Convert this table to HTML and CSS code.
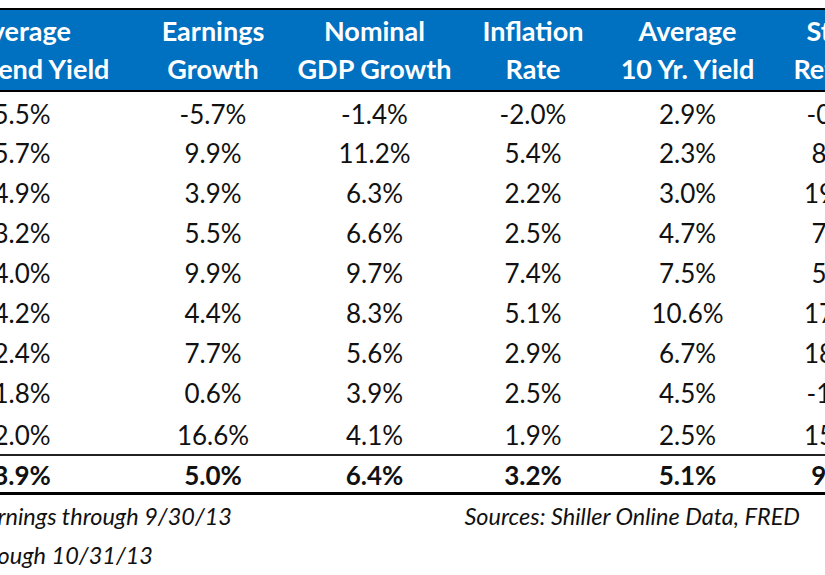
FILE: index.html
```html
<!DOCTYPE html>
<html>
<head>
<meta charset="utf-8">
<link rel="stylesheet" href="styles.css">
</head>
<body>
<div class="frame">
  <div class="sheet">
    <table class="grid">
      <colgroup>
        <col class="c-div"><col class="c-earn"><col class="c-gdp"><col class="c-inf"><col class="c-yld"><col class="c-ret">
      </colgroup>
      <thead>
        <tr>
          <th>Average<br>Dividend Yield</th>
          <th>Earnings<br>Growth</th>
          <th>Nominal<br>GDP Growth</th>
          <th>Inflation<br>Rate</th>
          <th>Average<br>10 Yr. Yield</th>
          <th>Stock<br>Returns</th>
        </tr>
      </thead>
      <tbody>
        <tr><td>5.5%</td><td>-5.7%</td><td>-1.4%</td><td>-2.0%</td><td>2.9%</td><td>-0.9%</td></tr>
        <tr><td>5.7%</td><td>9.9%</td><td>11.2%</td><td>5.4%</td><td>2.3%</td><td>8.0%</td></tr>
        <tr><td>4.9%</td><td>3.9%</td><td>6.3%</td><td>2.2%</td><td>3.0%</td><td>19.3%</td></tr>
        <tr><td>3.2%</td><td>5.5%</td><td>6.6%</td><td>2.5%</td><td>4.7%</td><td>7.8%</td></tr>
        <tr><td>4.0%</td><td>9.9%</td><td>9.7%</td><td>7.4%</td><td>7.5%</td><td>5.9%</td></tr>
        <tr><td>4.2%</td><td>4.4%</td><td>8.3%</td><td>5.1%</td><td>10.6%</td><td>17.3%</td></tr>
        <tr><td>2.4%</td><td>7.7%</td><td>5.6%</td><td>2.9%</td><td>6.7%</td><td>18.1%</td></tr>
        <tr><td>1.8%</td><td>0.6%</td><td>3.9%</td><td>2.5%</td><td>4.5%</td><td>-1.2%</td></tr>
        <tr class="last"><td>2.0%</td><td>16.6%</td><td>4.1%</td><td>1.9%</td><td>2.5%</td><td>15.4%</td></tr>
      </tbody>
      <tfoot>
        <tr><td>3.9%</td><td>5.0%</td><td>6.4%</td><td>3.2%</td><td>5.1%</td><td>9.5%</td></tr>
      </tfoot>
    </table>
    <div class="notes">
      <div class="notes-left">
        <p class="note-a">*Earnings through 9/30/13</p>
        <p class="note-b">Through 10/31/13</p>
      </div>
      <p class="notes-right">Sources: Shiller Online Data, FRED</p>
    </div>
  </div>
</div>
</body>
</html>
```
FILE: styles.css
```css
html, body {
  margin: 0;
  padding: 0;
  background: #ffffff;
}
.frame {
  width: 825px;
  height: 575px;
  overflow: hidden;
  background: #ffffff;
}
.sheet {
  margin-left: -88px;
  width: 1004px;
  padding-top: 8px;
  font-family: Lato, "Open Sans", sans-serif;
  color: #111111;
}
.grid {
  border-collapse: collapse;
  table-layout: fixed;
  width: 1004px;
}
.c-div { width: 220px; }
.c-earn { width: 162px; }
.c-gdp { width: 161px; }
.c-inf { width: 156px; }
.c-yld { width: 153px; }
.c-ret { width: 152px; }
.grid thead tr { height: 82px; }
.grid thead th {
  background: #0070c0;
  color: #ffffff;
  font-weight: 700;
  font-size: 27px;
  line-height: 38px;
  padding: 2px 0 0;
  text-align: center;
  vertical-align: top;
  white-space: nowrap;
  border-top: 2px solid #000;
  border-bottom: 2px solid #000;
}
.grid tbody tr { height: 40px; }
.grid tbody tr.last { height: 44px; }
.grid td {
  text-align: center;
  font-size: 26px;
  line-height: 30px;
  padding: 7px 0 0;
  vertical-align: top;
  white-space: nowrap;
}
.grid tr.last td { padding-top: 9px; border-bottom: 2px solid #222; }
.grid tfoot tr { height: 38px; }
.grid tfoot td {
  font-weight: 700;
  padding-top: 4px;
  border-bottom: 3px solid #000;
}
.notes {
  display: flex;
  justify-content: space-between;
  align-items: flex-start;
  width: 888px;
  font-style: italic;
  font-size: 23.5px;
  padding-top: 2px;
}
.notes p {
  margin: 0;
  line-height: 39px;
  white-space: nowrap;
}
.note-a, .note-b { text-align: right; }
.note-a { width: 320px; }
.note-b { width: 241px; }
```
